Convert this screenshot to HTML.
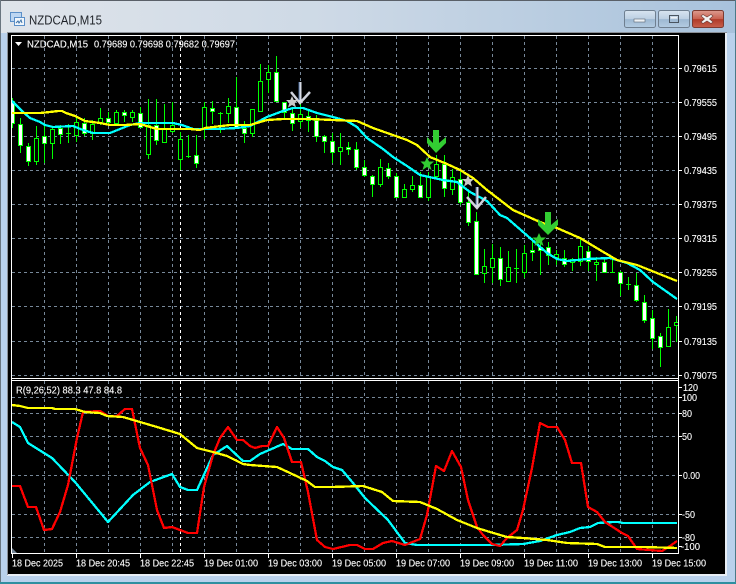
<!DOCTYPE html>
<html><head><meta charset="utf-8"><style>
html,body{margin:0;padding:0;background:#b9d1ec}
body{width:736px;height:584px;overflow:hidden;position:relative}
svg{display:block;position:absolute;left:0;top:0}
text{font-family:"Liberation Sans",sans-serif;font-size:10.5px;fill:#fff;stroke:#fff;stroke-width:.12}
</style></head><body>
<svg width="736" height="584" viewBox="0 0 736 584" xmlns="http://www.w3.org/2000/svg">
<defs>
<linearGradient id="tb" x1="0" x2="1" y1="0" y2="0"><stop offset="0" stop-color="#dfe4ea"/><stop offset=".45" stop-color="#cdd9e6"/><stop offset="1" stop-color="#a8c2dc"/></linearGradient>
<linearGradient id="sd" x1="0" x2="0" y1="0" y2="1"><stop offset="0" stop-color="#e2e7ee"/><stop offset=".2" stop-color="#d8e2ee"/><stop offset=".22" stop-color="#b9d1ec"/><stop offset="1" stop-color="#b9d1ec"/></linearGradient>
<linearGradient id="bt" x1="0" x2="0" y1="0" y2="1"><stop offset="0" stop-color="#d8e4f0"/><stop offset=".5" stop-color="#bccfe2"/><stop offset=".52" stop-color="#9db8d2"/><stop offset="1" stop-color="#b4cce2"/></linearGradient>
<linearGradient id="cl" x1="0" x2="0" y1="0" y2="1"><stop offset="0" stop-color="#dc9c90"/><stop offset=".5" stop-color="#c9604f"/><stop offset=".52" stop-color="#b03a28"/><stop offset="1" stop-color="#c8604c"/></linearGradient>
<clipPath id="cm"><rect x="12" y="36" width="666" height="342"/></clipPath>
<clipPath id="cs"><rect x="12" y="381" width="666" height="172"/></clipPath>
</defs>
<rect width="736" height="584" fill="#b9d1ec"/>
<rect width="736" height="120" fill="url(#sd)"/>
<rect x="0" y="0" width="736" height="33" fill="url(#tb)"/>
<rect x="0" y="0" width="736" height="1" fill="#5a6068"/>
<rect x="0" y="0" width="1" height="584" fill="#6a7680"/>
<rect x="735" y="0" width="1" height="584" fill="#4a7a88"/>
<rect x="0" y="582" width="736" height="2" fill="#2f8fa0"/>
<rect x="7" y="32" width="720" height="544" fill="#e8eef5"/>
<rect x="7" y="32" width="720" height="1" fill="#8a8f96"/>
<rect x="7" y="32" width="1" height="543" fill="#8a8f96"/>
<rect x="8" y="33" width="717" height="541" fill="#000"/>

<!-- window icon -->
<rect x="10.500" y="12.500" width="11" height="9" fill="#bcd6f2" stroke="#5b8fc8"/>
<rect x="14.500" y="17.500" width="10" height="8" fill="#f0f6fc" stroke="#5b8fc8"/>
<path d="M16 23l2-2 1 2 2-3 1 3" fill="none" stroke="#3c72a8"/>
<text x="29" y="24.500" style="font-size:13px;fill:#1e2228;stroke:none" textLength="73" lengthAdjust="spacingAndGlyphs">NZDCAD,M15</text>

<!-- buttons -->
<rect x="624.500" y="10.500" width="31" height="17" rx="2" fill="url(#bt)" stroke="#6f7f90"/>
<rect x="634" y="19" width="11" height="3" fill="#eef2f6" stroke="#5a6470" stroke-width=".6"/>
<rect x="658.500" y="10.500" width="31" height="17" rx="2" fill="url(#bt)" stroke="#6f7f90"/>
<rect x="669.500" y="15.500" width="9" height="7" fill="none" stroke="#4a5560"/><rect x="671" y="17" width="6" height="1.500" fill="#eef2f6"/>
<rect x="692.500" y="10.500" width="31" height="17" rx="2" fill="url(#cl)" stroke="#7d3a30"/>
<path d="M703 14.500l4 2.500 4-2.500 2 1.500-3.500 3 3.500 3-2 1.500-4-2.500-4 2.500-2-1.500 3.500-3-3.500-3z" fill="#f2f2f2" stroke="#6a3a34" stroke-width=".6"/>

<!-- grid main -->
<g clip-path="url(#cm)" stroke="#778899" stroke-width="1" stroke-dasharray="3 3" fill="none" shape-rendering="crispEdges">
<path d="M12 68.500H678M12 102.500H678M12 136.500H678M12 170.500H678M12 204.500H678M12 238.500H678M12 272.500H678M12 306.500H678M12 341.500H678M12 375.500H678"/>
<path d="M44.500 36V378M76.500 36V378M108.500 36V378M140.500 36V378M172.500 36V378M204.500 36V378M236.500 36V378M268.500 36V378M300.500 36V378M332.500 36V378M364.500 36V378M396.500 36V378M428.500 36V378M460.500 36V378M492.500 36V378M524.500 36V378M556.500 36V378M588.500 36V378M620.500 36V378M652.500 36V378"/>
<path d="M180.500 36V378" stroke="#fff"/>
</g>
<!-- grid sub -->
<g clip-path="url(#cs)" stroke="#778899" stroke-width="1" stroke-dasharray="3 3" fill="none" shape-rendering="crispEdges">
<path d="M12 397.500H678M12 413.500H678M12 436.500H678M12 475.500H678M12 514.500H678M12 537.500H678"/>
<path d="M44.500 381V553M76.500 381V553M108.500 381V553M140.500 381V553M172.500 381V553M204.500 381V553M236.500 381V553M268.500 381V553M300.500 381V553M332.500 381V553M364.500 381V553M396.500 381V553M428.500 381V553M460.500 381V553M492.500 381V553M524.500 381V553M556.500 381V553M588.500 381V553M620.500 381V553M652.500 381V553"/>
<path d="M180.500 381V553" stroke="#fff"/>
</g>

<!-- candles -->
<g clip-path="url(#cm)" shape-rendering="crispEdges" stroke="#00ff00" stroke-width="1">
<path fill="none" d="M12.500 98V128M20.500 118V153M28.500 143V166M36.500 126V165M44.500 123V163M52.500 126V159M60.500 125V144M68.500 124V143M76.500 117V142M84.500 118V136M92.500 120V140M100.500 108V125M108.500 112V125M116.500 110V124M124.500 110V122M132.500 110V122M140.500 107V128M148.500 99V159M156.500 99V145M164.500 104V137M172.500 102V133M180.500 132V170M188.500 135V158M196.500 135V168M204.500 102V139M212.500 101V124M220.500 112V133M228.500 98V123M236.500 77V129M244.500 121V143M252.500 109V137M260.500 64V112M268.500 65V93M276.500 56V102M284.500 102V119M292.500 107V131M300.500 103V128M308.500 110V132M316.500 115V142M324.500 135V153M332.500 133V163M340.500 133V165M348.500 142V155M356.500 142V170M364.500 160V177M372.500 175V197M380.500 159V187M388.500 163V179M396.500 173V198M404.500 184V198M412.500 176V192M420.500 172V198M428.500 172V201M436.500 155V179M444.500 155V197M452.500 169V195M460.500 172V205M468.500 192V226M476.500 212V274M484.500 249V283M492.500 244V283M500.500 247V286M508.500 251V281M516.500 249V283M524.500 245V278M532.500 238V261M540.500 240V275M548.500 242V265M556.500 250V265M564.500 250V267M572.500 258V271M580.500 240V266M588.500 246V271M596.500 257V281M604.500 258V273M612.500 258V273M620.500 271V296M628.500 277V290M636.500 273V302M644.500 295V323M652.500 310V349M660.500 333V367M668.500 309V347M676.500 316V342M66 133.500h5M186 156.500h5M218 113.500h5M514 268.500h5M610 272.500h5M626 284.500h5"/>
<path fill="#000" d="M34.500 138.500h4v23h-4zM50.500 129.500h4v14h-4zM74.500 122.500h4v13h-4zM90.500 124.500h4v9h-4zM98.500 118.500h4v4h-4zM114.500 112.500h4v11h-4zM130.500 112.500h4v5h-4zM146.500 125.500h4v29h-4zM162.500 128.500h4v14h-4zM170.500 125.500h4v6h-4zM178.500 139.500h4v20h-4zM202.500 107.500h4v22h-4zM226.500 106.500h4v7h-4zM250.500 109.500h4v24h-4zM258.500 81.500h4v30h-4zM266.500 72.500h4v7h-4zM298.500 114.500h4v7h-4zM338.500 147.500h4v4h-4zM378.500 167.500h4v17h-4zM402.500 189.500h4v8h-4zM410.500 185.500h4v4h-4zM426.500 176.500h4v21h-4zM434.500 164.500h4v12h-4zM450.500 177.500h4v12h-4zM482.500 266.500h4v7h-4zM490.500 258.500h4v9h-4zM506.500 267.500h4v14h-4zM522.500 253.500h4v19h-4zM554.500 254.500h4v3h-4zM570.500 259.500h4v3h-4zM578.500 246.500h4v15h-4zM594.500 262.500h4v2h-4zM666.500 327.500h4v19h-4zM674.500 322.500h4v3h-4z"/>
<path fill="#fff" d="M11.500 101.500h3v22h-3zM18.500 124.500h4v21h-4zM26.500 146.500h4v15h-4zM42.500 136.500h4v7h-4zM58.500 128.500h4v6h-4zM82.500 123.500h4v10h-4zM106.500 118.500h4v4h-4zM122.500 112.500h4v3h-4zM138.500 113.500h4v14h-4zM154.500 125.500h4v15h-4zM194.500 155.500h4v8h-4zM210.500 108.500h4v3h-4zM234.500 107.500h4v20h-4zM242.500 128.500h4v5h-4zM274.500 72.500h4v29h-4zM282.500 102.500h4v10h-4zM290.500 113.500h4v10h-4zM306.500 116.500h4v4h-4zM314.500 120.500h4v16h-4zM322.500 136.500h4v5h-4zM330.500 141.500h4v11h-4zM346.500 147.500h4v2h-4zM354.500 149.500h4v18h-4zM362.500 167.500h4v8h-4zM370.500 176.500h4v8h-4zM386.500 168.500h4v8h-4zM394.500 176.500h4v21h-4zM418.500 185.500h4v12h-4zM442.500 164.500h4v24h-4zM458.500 179.500h4v23h-4zM466.500 202.500h4v20h-4zM474.500 221.500h4v53h-4zM498.500 258.500h4v21h-4zM530.500 250.500h4v2h-4zM538.500 247.500h4v3h-4zM546.500 247.500h4v8h-4zM562.500 258.500h4v6h-4zM586.500 251.500h4v10h-4zM602.500 262.500h4v10h-4zM618.500 272.500h4v11h-4zM634.500 285.500h4v15h-4zM642.500 302.500h4v18h-4zM650.500 318.500h4v20h-4zM658.500 336.500h4v11h-4z"/>
</g>

<!-- main lines -->
<g clip-path="url(#cm)" fill="none" stroke-width="2.300" stroke-linejoin="round" shape-rendering="crispEdges">
<polyline stroke="#00ffff" points="12,101 23,112 30,118 40,122 45,125 53,127 73,126 83,130 93,133 110,133 120,129 130,125 140,123 173,123 182,125 193,129 217,129 237,128 250,126 267,117 283,111 293,108 303,108 317,113 333,117 347,121 357,127 367,138 383,149 393,157 407,166 420,175 443,180 457,182 470,192 487,201 500,215 507,218 530,238 547,253 557,259 567,261 587,259 610,258 627,263 640,270 653,282 677,299"/>
<polyline stroke="#ffff00" points="12,113 40,113 50,112 58,111 62,111 66,113 75,116 85,121 100,123 110,125 125,125 140,124 150,127 157,129 172,129 190,129 200,130 205,128 230,125 250,125 267,120 283,119 310,119 333,120 357,121 373,128 390,134 407,140 417,145 430,157 447,164 460,170 473,178 487,190 513,210 540,222 557,228 580,238 600,250 617,260 637,265 657,273 677,281"/>
</g>

<!-- arrows and stars -->
<g clip-path="url(#cm)">
<path d="M291 92L300 103L310 92" fill="none" stroke="#d0d3dc" stroke-width="2.500"/>
<path d="M300 82V102" stroke="#d8dce6" stroke-width="3"/><path d="M299 82V100" stroke="#4a6a9a" stroke-width="1"/>
<polygon points="292,96 293.700,100 298,100 294.700,103 296,107.500 292,105 288,107.500 289.300,103 286,100 290.300,100" fill="#c9c9c9"/>
<path d="M467 197L477 208L486 197" fill="none" stroke="#d0d3dc" stroke-width="2.500"/>
<path d="M477 187V207" stroke="#d8dce6" stroke-width="3"/><path d="M476 187V205" stroke="#4a6a9a" stroke-width="1"/>
<polygon points="468,175 469.700,179 474,179 470.700,182 472,186.500 468,184 464,186.500 465.300,182 462,179 466.300,179" fill="#c9c9c9"/>
<polygon points="433,130 439,130 439,143 446,137 446,143 436,153 427,143 427,137 433,143" fill="#32cd32"/>
<polygon points="427,157 429,161.500 434,161.500 430,165 431.500,170 427,167 422.500,170 424,165 420.500,161.500 425,161.500" fill="#32cd32"/>
<polygon points="545,212 551,212 551,225 558,219 558,225 548,235 538,225 538,219 545,225" fill="#32cd32"/>
<polygon points="539,233 541,237.500 546,237.500 542,241 543.500,246 539,243 534.500,246 536,241 532.500,237.500 537,237.500" fill="#32cd32"/>
</g>

<!-- sub lines -->
<g clip-path="url(#cs)" fill="none" stroke-width="2.300" stroke-linejoin="round" shape-rendering="crispEdges">
<polyline stroke="#00ffff" points="12,422 20,427 28,443 52,458 75,482 108,522 133,495 150,482 172,474 180,487 188,490 197,490 213,455 227,446 243,461 250,461 260,454 283,444 292,449 308,449 317,457 325,461 333,467 342,470 353,483 365,498 388,520 405,543 417,545 490,545 523,544 540,541 557,535 570,532 580,528 590,527 598,523 613,522 618,522 623,523 677,523"/>
<polyline stroke="#ff0000" points="12,486 20,486 28,507 36,507 44,530 52,529 60,512 68,485 77,438 83,412 100,411 108,416 117,416 125,409 132,409 140,448 148,465 157,510 164,528 172,527 180,530 188,533 197,533 204,487 213,455 220,438 228,427 237,440 243,440 250,446 255,448 262,446 268,446 277,427 284,438 292,462 301,462 308,492 317,540 325,547 333,549 350,545 357,545 365,549 373,549 383,543 392,541 405,545 420,539 427,515 436,466 444,471 452,451 461,467 468,500 477,527 483,535 492,544 500,546 507,538 517,530 523,510 532,468 540,423 548,427 557,427 565,440 572,463 581,463 588,507 597,512 605,522 622,533 628,536 637,549 662,551 670,546 677,541"/>
<polyline stroke="#ffff00" points="12,405 20,406 28,408 52,408 55,409 75,409 85,412 100,413 107,416 123,417 140,422 157,427 180,434 197,448 213,452 227,456 243,464 250,465 277,467 290,473 307,481 315,487 332,487 363,486 382,492 393,501 420,502 437,509 457,520 477,528 490,532 507,537 523,538 547,540 567,543 597,544 605,547 643,547 677,548"/>
</g>

<!-- frame -->
<g shape-rendering="crispEdges" stroke="#fff" fill="none" stroke-width="1">
<path d="M11.500 35.500H678.500V553.500H11.500Z"/>
<path d="M12 378.500H678M12 380.500H678"/>
<path d="M679 68.500h3M679 102.500h3M679 136.500h3M679 170.500h3M679 204.500h3M679 238.500h3M679 272.500h3M679 306.500h3M679 341.500h3M679 375.500h3M679 387.500h3M679 397.500h3M679 413.500h3M679 436.500h3M679 475.500h3M679 514.500h3M679 537.500h3M679 546.500h3"/>
<path d="M12.500 554v4M76.500 554v4M140.500 554v4M204.500 554v4M268.500 554v4M332.500 554v4M396.500 554v4M460.500 554v4M524.500 554v4M588.500 554v4M652.500 554v4"/>
</g>
<polygon points="12,548 12,553 17,553" fill="#778899"/>
<polygon points="15,42 22,42 18.500,46" fill="#fff"/>

<!-- texts -->
<text x="27" y="47.500" textLength="61" lengthAdjust="spacingAndGlyphs">NZDCAD,M15</text>
<text x="94" y="47.500" textLength="141" lengthAdjust="spacingAndGlyphs">0.79689 0.79698 0.79682 0.79697</text>
<text x="16" y="393.500" textLength="106" lengthAdjust="spacingAndGlyphs">R(9,26,52) 88.3 47.8 84.8</text>
<g>
<text x="684" y="72" textLength="33" lengthAdjust="spacingAndGlyphs">0.79615</text>
<text x="684" y="106" textLength="33" lengthAdjust="spacingAndGlyphs">0.79555</text>
<text x="684" y="140" textLength="33" lengthAdjust="spacingAndGlyphs">0.79495</text>
<text x="684" y="174" textLength="33" lengthAdjust="spacingAndGlyphs">0.79435</text>
<text x="684" y="208" textLength="33" lengthAdjust="spacingAndGlyphs">0.79375</text>
<text x="684" y="242" textLength="33" lengthAdjust="spacingAndGlyphs">0.79315</text>
<text x="684" y="276" textLength="33" lengthAdjust="spacingAndGlyphs">0.79255</text>
<text x="684" y="310" textLength="33" lengthAdjust="spacingAndGlyphs">0.79195</text>
<text x="684" y="345" textLength="33" lengthAdjust="spacingAndGlyphs">0.79135</text>
<text x="684" y="379" textLength="33" lengthAdjust="spacingAndGlyphs">0.79075</text>
<text x="683" y="391" textLength="15" lengthAdjust="spacingAndGlyphs">120</text>
<text x="682" y="401" textLength="15" lengthAdjust="spacingAndGlyphs">100</text>
<text x="682" y="417" textLength="10" lengthAdjust="spacingAndGlyphs">80</text>
<text x="682" y="440" textLength="10" lengthAdjust="spacingAndGlyphs">50</text>
<text x="683" y="479" textLength="17" lengthAdjust="spacingAndGlyphs">0.00</text>
<text x="682" y="518" textLength="13" lengthAdjust="spacingAndGlyphs">-50</text>
<text x="682" y="541" textLength="13" lengthAdjust="spacingAndGlyphs">-80</text>
<text x="681" y="550" textLength="19" lengthAdjust="spacingAndGlyphs">-100</text>
</g>
<g>
<text x="12" y="566.500" textLength="51" lengthAdjust="spacingAndGlyphs">18 Dec 2025</text>
<text x="76" y="566.500" textLength="54" lengthAdjust="spacingAndGlyphs">18 Dec 20:45</text>
<text x="140" y="566.500" textLength="54" lengthAdjust="spacingAndGlyphs">18 Dec 22:45</text>
<text x="204" y="566.500" textLength="54" lengthAdjust="spacingAndGlyphs">19 Dec 01:00</text>
<text x="268" y="566.500" textLength="54" lengthAdjust="spacingAndGlyphs">19 Dec 03:00</text>
<text x="332" y="566.500" textLength="54" lengthAdjust="spacingAndGlyphs">19 Dec 05:00</text>
<text x="396" y="566.500" textLength="54" lengthAdjust="spacingAndGlyphs">19 Dec 07:00</text>
<text x="460" y="566.500" textLength="54" lengthAdjust="spacingAndGlyphs">19 Dec 09:00</text>
<text x="524" y="566.500" textLength="54" lengthAdjust="spacingAndGlyphs">19 Dec 11:00</text>
<text x="588" y="566.500" textLength="54" lengthAdjust="spacingAndGlyphs">19 Dec 13:00</text>
<text x="652" y="566.500" textLength="54" lengthAdjust="spacingAndGlyphs">19 Dec 15:00</text>
</g>
</svg>
</body></html>
